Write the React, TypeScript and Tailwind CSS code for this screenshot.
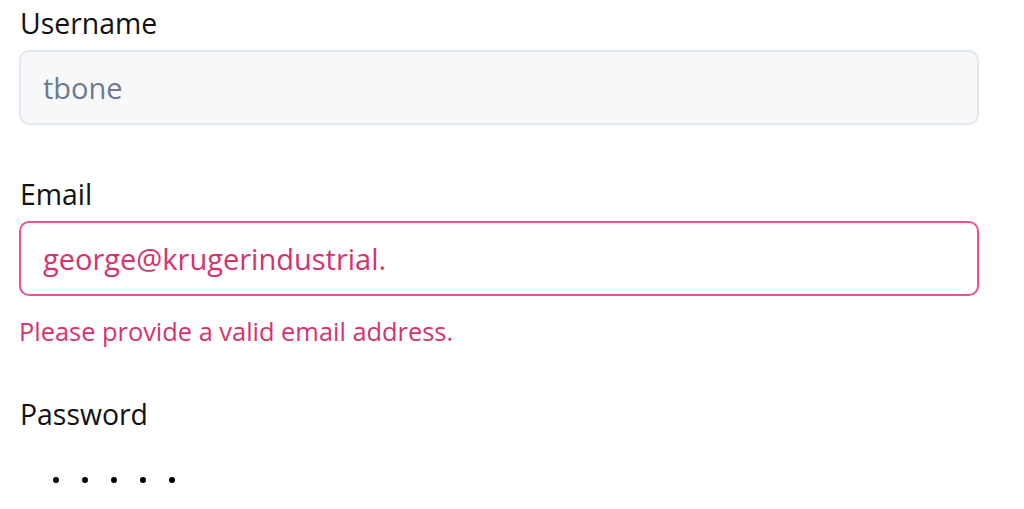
export default function App() {
  return (
    <div className="h-[509px] w-[1024px] overflow-hidden bg-white pl-[19px] pt-[5px] font-['Open_Sans',sans-serif]">
      <div className="w-[960px]">
        <label className="block pl-px text-[28.4px] leading-[36px] text-[#111111]">Username</label>
        <div className="mt-[9px] flex h-[75px] items-center rounded-[10px] border-2 border-[#e3e7ee] bg-[#f7f8fa] px-[22px] text-[29px] text-[#6c7a8f]">
          tbone
        </div>

        <label className="mt-[51px] block pl-px text-[28.4px] leading-[36px] text-[#111111]">Email</label>
        <div className="mt-[9px] flex h-[75px] items-center rounded-[10px] border-2 border-[#ec4f94] bg-white px-[22px] text-[29px] text-[#d6336c]">
          george@krugerindustrial.
        </div>
        <p className="mt-[18px] text-[25.4px] leading-[34px] text-[#d6336c]">Please provide a valid email address.</p>

        <label className="mt-[48px] block pl-px text-[28.4px] leading-[36px] text-[#111111]">Password</label>
        <div className="mt-[9px] flex h-[75px] items-center px-[22px]">
          <div className="flex gap-[23px] pl-[12px] pt-[2px]">
            {[0, 1, 2, 3, 4].map((i) => (
              <span key={i} className="h-[6px] w-[6px] rounded-full bg-black" />
            ))}
          </div>
        </div>
      </div>
    </div>
  );
}
